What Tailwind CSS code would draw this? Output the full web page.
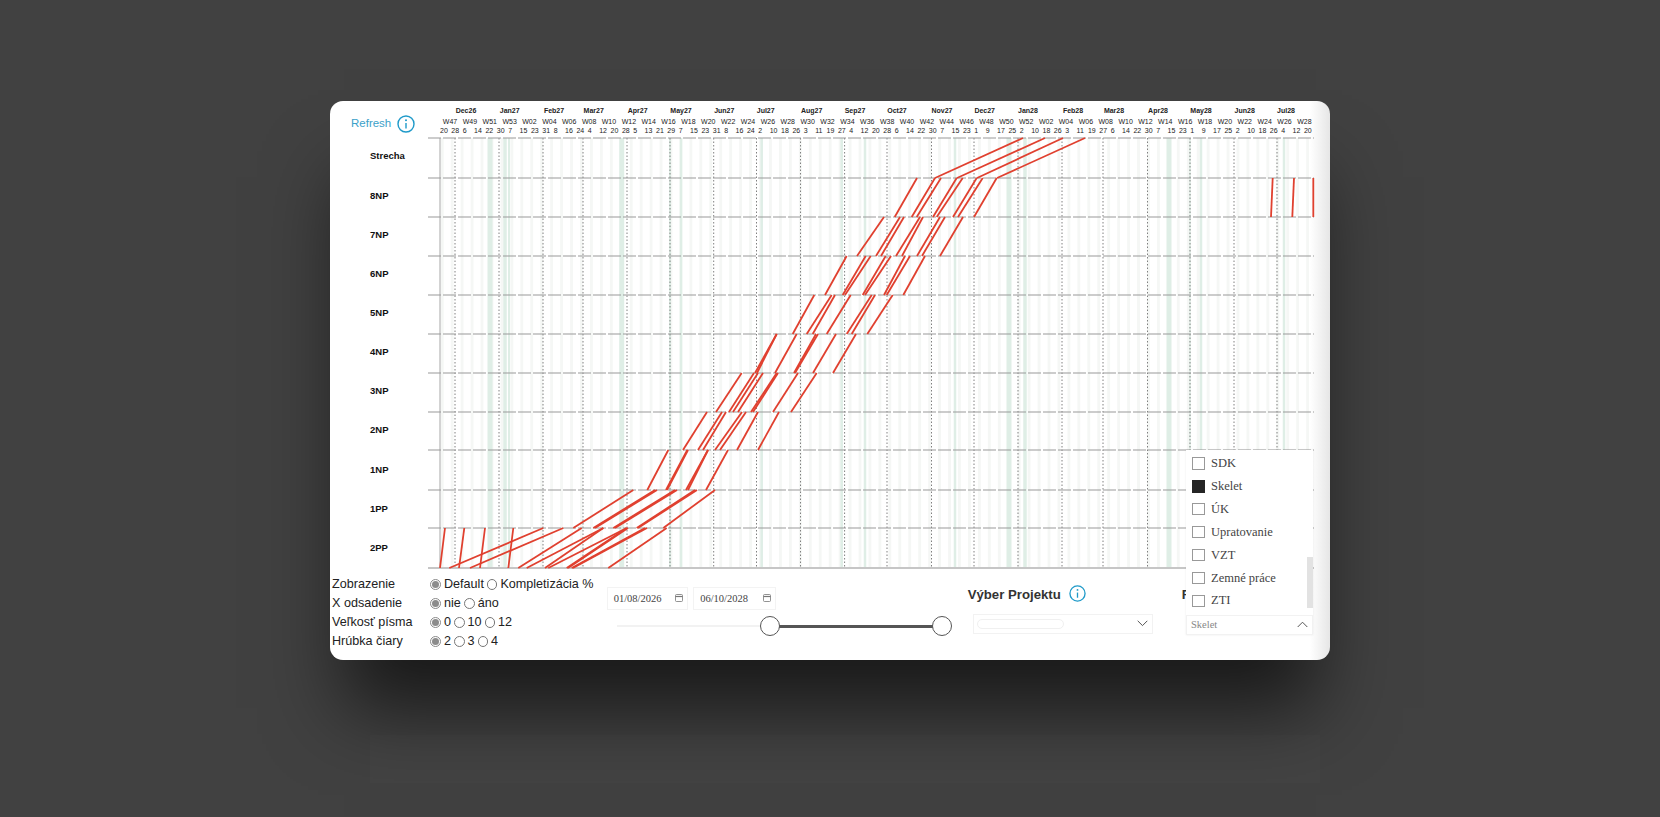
<!DOCTYPE html>
<html lang="sk">
<head>
    <meta charset="UTF-8">
    <title>Harmonogram</title>
    <script src="https://cdn.jsdelivr.net/npm/@tailwindcss/browser@4"></script>
</head>
<body class="relative bg-[#414141] h-screen overflow-hidden [font-family:'Liberation_Sans',sans-serif]">
    <!-- faint floor reflection under the card -->
    <div class="absolute left-[370px] top-[735px] w-[950px] h-[48px] bg-white/[0.012]"></div>

    <div class="relative flex justify-center pt-[101px]">
        <!-- Card -->
        <div class="relative w-[1000px] h-[559px] rounded-[13px] bg-linear-to-r from-white from-[98%] to-[#e6e6e6] shadow-[0_62px_72px_-14px_rgba(0,0,0,0.62)] flex flex-col">

            <!-- Chart area -->
            <div class="flex h-[468px]">
                <div class="w-[98px] shrink-0 flex flex-col">
                    <div class="h-[37px] flex items-center pl-[21px] gap-[5px] pt-[8px]">
                        <span class="text-[11.5px] text-[#3ba1c9]">Refresh</span>
                        <svg class="w-[18px] h-[18px] ml-[1px]" viewBox="0 0 18 18" fill="none"><circle cx="9" cy="9" r="8" stroke="#1f9ac9" stroke-width="1.4"/><circle cx="9" cy="5.2" r="1" fill="#1f9ac9"/><path d="M9 8v5.5" stroke="#1f9ac9" stroke-width="1.4"/></svg>
                    </div>
                    <div class="flex-1 grid grid-rows-11 pl-[40px] text-[9.5px] font-bold text-[#111] -mt-[1px] pb-[1.5px]">
                        <div class="flex items-center">Strecha</div>
                        <div class="flex items-center">8NP</div>
                        <div class="flex items-center">7NP</div>
                        <div class="flex items-center">6NP</div>
                        <div class="flex items-center">5NP</div>
                        <div class="flex items-center">4NP</div>
                        <div class="flex items-center">3NP</div>
                        <div class="flex items-center">2NP</div>
                        <div class="flex items-center">1NP</div>
                        <div class="flex items-center">1PP</div>
                        <div class="flex items-center">2PP</div>
                    </div>
                </div>
                <svg id="chart" class="w-[902px] h-[468px] shrink-0" viewBox="428 101 902 468"></svg>
            </div>

            <!-- Controls -->
            <div class="flex flex-1">
                <!-- Options -->
                <div class="w-[276.7px] shrink-0 pl-[2px] pt-[6px] text-[12.6px] text-[#222] leading-[19px]">
                    <div class="flex h-[19px] items-center">
                        <span class="w-[98px]">Zobrazenie</span>
                        <span class="w-[10.5px] h-[10.5px] rounded-full border border-[#8a8a8a] flex items-center justify-center mr-[3.5px]"><span class="w-[7.5px] h-[7.5px] rounded-full bg-[#8c8c8c]"></span></span>
                        <span>Default</span>
                        <span class="w-[10.5px] h-[10.5px] rounded-full border border-[#777] ml-[3px] mr-[3px]"></span>
                        <span>Kompletizácia %</span>
                    </div>
                    <div class="flex h-[19px] items-center">
                        <span class="w-[98px]">X odsadenie</span>
                        <span class="w-[10.5px] h-[10.5px] rounded-full border border-[#8a8a8a] flex items-center justify-center mr-[3.5px]"><span class="w-[7.5px] h-[7.5px] rounded-full bg-[#8c8c8c]"></span></span>
                        <span>nie</span>
                        <span class="w-[10.5px] h-[10.5px] rounded-full border border-[#777] ml-[3.5px] mr-[3px]"></span>
                        <span>áno</span>
                    </div>
                    <div class="flex h-[19px] items-center">
                        <span class="w-[98px]">Veľkosť písma</span>
                        <span class="w-[10.5px] h-[10.5px] rounded-full border border-[#8a8a8a] flex items-center justify-center mr-[3.5px]"><span class="w-[7.5px] h-[7.5px] rounded-full bg-[#8c8c8c]"></span></span>
                        <span>0</span>
                        <span class="w-[10.5px] h-[10.5px] rounded-full border border-[#777] ml-[3px] mr-[3px]"></span>
                        <span>10</span>
                        <span class="w-[10.5px] h-[10.5px] rounded-full border border-[#777] ml-[3px] mr-[3px]"></span>
                        <span>12</span>
                    </div>
                    <div class="flex h-[19px] items-center">
                        <span class="w-[98px]">Hrúbka čiary</span>
                        <span class="w-[10.5px] h-[10.5px] rounded-full border border-[#8a8a8a] flex items-center justify-center mr-[3.5px]"><span class="w-[7.5px] h-[7.5px] rounded-full bg-[#8c8c8c]"></span></span>
                        <span>2</span>
                        <span class="w-[10.5px] h-[10.5px] rounded-full border border-[#777] ml-[3px] mr-[3px]"></span>
                        <span>3</span>
                        <span class="w-[10.5px] h-[10.5px] rounded-full border border-[#777] ml-[3px] mr-[3px]"></span>
                        <span>4</span>
                    </div>
                </div>

                <!-- Dates and slider -->
                <div class="w-[361px] shrink-0 pt-[18px]">
                    <div class="flex gap-[5px] [font-family:'Liberation_Serif',serif] text-[10.5px] text-[#444]">
                        <div class="w-[81.5px] h-[23px] border border-[#f3f3f3] flex items-center justify-between pl-[6px] pr-[4px]">
                            <span>01/08/2026</span>
                            <svg class="w-[8px] h-[8px] mb-[2px]" viewBox="0 0 8 8" fill="none"><rect x="0.5" y="0.5" width="7" height="7" rx="1" stroke="#777" stroke-width="0.8"/><path d="M0.5 2.5h7" stroke="#777" stroke-width="1.2"/></svg>
                        </div>
                        <div class="w-[82.5px] h-[23px] border border-[#f3f3f3] flex items-center justify-between pl-[6px] pr-[4px]">
                            <span>06/10/2028</span>
                            <svg class="w-[8px] h-[8px] mb-[2px]" viewBox="0 0 8 8" fill="none"><rect x="0.5" y="0.5" width="7" height="7" rx="1" stroke="#777" stroke-width="0.8"/><path d="M0.5 2.5h7" stroke="#777" stroke-width="1.2"/></svg>
                        </div>
                    </div>
                    <div class="relative ml-[10px] mt-[15px] w-[325px] h-[2px] bg-[#f2f2f2]">
                        <div class="absolute left-[153px] right-0 h-[2.5px] bg-[#555]"></div>
                        <div class="absolute left-[143px] top-[-9px] w-[20px] h-[20px] rounded-full bg-white border-[1.5px] border-[#555]"></div>
                        <div class="absolute left-[315px] top-[-9px] w-[20px] h-[20px] rounded-full bg-white border-[1.5px] border-[#555]"></div>
                    </div>
                </div>

                <!-- Project select -->
                <div class="w-[214px] shrink-0 pt-[16px]">
                    <div class="flex items-center gap-[8px] h-[20px]">
                        <span class="text-[13.2px] font-bold text-[#333]">Výber Projektu</span>
                        <svg class="w-[17px] h-[17px] -mt-[3px]" viewBox="0 0 18 18" fill="none"><circle cx="9" cy="9" r="8" stroke="#1f9ac9" stroke-width="1.4"/><circle cx="9" cy="5.2" r="1" fill="#1f9ac9"/><path d="M9 8v5.5" stroke="#1f9ac9" stroke-width="1.4"/></svg>
                    </div>
                    <div class="ml-[5px] mt-[9px] w-[180px] h-[19.5px] border border-[#f2f2f2] flex items-center justify-between pl-[3px] pr-[4px]">
                        <div class="w-[87px] h-[10px] border border-[#f0f0f0] rounded-[5px]"></div>
                        <svg class="w-[11px] h-[7px]" viewBox="0 0 11 7" fill="none"><path d="M0.7 0.8l4.8 4.8 4.8-4.8" stroke="#555" stroke-width="1"/></svg>
                    </div>
                </div>

                <!-- Second select, title is covered by the open list -->
                <div class="pt-[16px] text-[13.2px] font-bold text-[#333]"><div class="h-[20px] flex items-center">F</div></div>
            </div>

            <!-- Open dropdown list -->
            <div class="absolute left-[856px] top-[349px] w-[126.5px] h-[184.5px] bg-white shadow-[0_0_2px_rgba(0,0,0,0.08)] flex flex-col">
                <div class="flex-1 relative pl-[6px] pt-[2px] [font-family:'Liberation_Serif',serif] text-[12.5px] text-[#444]">
                    <div class="flex items-center gap-[6.5px] h-[22.9px]"><span class="w-[12.5px] h-[12.5px] border border-[#999]"></span>SDK</div>
                    <div class="flex items-center gap-[6.5px] h-[22.9px]"><span class="w-[12.5px] h-[12.5px] bg-[#252525]"></span>Skelet</div>
                    <div class="flex items-center gap-[6.5px] h-[22.9px]"><span class="w-[12.5px] h-[12.5px] border border-[#999]"></span>ÚK</div>
                    <div class="flex items-center gap-[6.5px] h-[22.9px]"><span class="w-[12.5px] h-[12.5px] border border-[#999]"></span>Upratovanie</div>
                    <div class="flex items-center gap-[6.5px] h-[22.9px]"><span class="w-[12.5px] h-[12.5px] border border-[#999]"></span>VZT</div>
                    <div class="flex items-center gap-[6.5px] h-[22.9px]"><span class="w-[12.5px] h-[12.5px] border border-[#999]"></span>Zemné práce</div>
                    <div class="flex items-center gap-[6.5px] h-[22.9px]"><span class="w-[12.5px] h-[12.5px] border border-[#999]"></span>ZTI</div>
                    <div class="absolute right-0 top-[107px] w-[6px] h-[51px] bg-[#e2e2e2]"></div>
                </div>
                <div class="h-[19.5px] border border-[#f2f2f2] flex items-center justify-between pl-[4px] pr-[4px] [font-family:'Liberation_Serif',serif] text-[10.5px] text-[#888]">
                    <span>Skelet</span>
                    <svg class="w-[11px] h-[7px]" viewBox="0 0 11 7" fill="none"><path d="M0.7 6l4.8-4.8 4.8 4.8" stroke="#555" stroke-width="1"/></svg>
                </div>
            </div>
        </div>
    </div>

    <script>
        // Time axis: 9.947px per week, stripes start on the first Saturday
        const rowY = [138, 178, 217, 256, 295, 334, 373, 412, 450, 490, 528, 568];
        const top0 = rowY[0], bottom0 = rowY[11], h0 = bottom0 - top0;

        const months = [['Dec26',466],['Jan27',509.7],['Feb27',554],['Mar27',593.7],['Apr27',637.7],['May27',681],['Jun27',724.3],['Jul27',765.7],['Aug27',811.7],['Sep27',855],['Oct27',897],['Nov27',942],['Dec27',984.7],['Jan28',1028],['Feb28',1073],['Mar28',1114],['Apr28',1158],['May28',1201],['Jun28',1244.7],['Jul28',1286]];
        const weeks = 'W47 W49 W51 W53 W02 W04 W06 W08 W10 W12 W14 W16 W18 W20 W22 W24 W26 W28 W30 W32 W34 W36 W38 W40 W42 W44 W46 W48 W50 W52 W02 W04 W06 W08 W10 W12 W14 W16 W18 W20 W22 W24 W26 W28'.split(' ');
        const dates = '20 28 6 14 22 30 7 15 23 31 8 16 24 4 12 20 28 5 13 21 29 7 15 23 31 8 16 24 2 10 18 26 3 11 19 27 4 12 20 28 6 14 22 30 7 15 23 1 9 17 25 2 10 18 26 3 11 19 27 6 14 22 30 7 15 23 1 9 17 25 2 10 18 26 4 12 20'.split(' ');
        const monthLines = [455, 499, 543, 583, 627, 670, 713.7, 756.5, 800.5, 844.6, 887, 931.5, 974, 1018, 1062, 1103, 1147.5, 1190, 1234, 1277];
        // holidays, [x, width]
        const holidays = [[490,5],[505,3.5],[509,2],[621.7,5],[670,2],[681,2.5],[761.7,2.5],[841.7,2.5],[865,2.5],[955,2.5],[1009,5],[1025,3.5],[1169,5],[1190,1.5],[1201,2.5],[1284,2.5]];

        // red work segments per floor: [bottom x, top x]
        const works = [
            [1, [[935,1023],[957,1045],[977,1063],[997,1085]]],
            [2, [[894.7,917],[911.7,935],[916.7,941],[933,956.7],[936.7,962.7],[953,976.7],[958,982.7],[974,996.7],[1271,1272.7],[1292.3,1294],[1313.3,1313.3]]],
            [3, [[857,884],[876,900],[881,904],[896,920],[902,923],[917,940],[922,945],[940,963]]],
            [4, [[825,846.7],[842.7,865.7],[845,870.7],[862.7,885.7],[865,891],[884,905],[886.7,910],[903.3,925]]],
            [5, [[792.7,814.3],[806.7,831.7],[812.7,835],[826.7,850.7],[846.7,871.7],[851.7,875],[867.3,892.7]]],
            [6, [[755,776.7],[757,776.7],[775,796.7],[794,816],[795,818],[813,836],[833,856]]],
            [7, [[716,741.7],[729,754],[733,758],[738,763],[751,776.7],[753,778],[773,798],[791,816.7]]],
            [8, [[683,707],[698,722],[703,726],[715,742],[720,746],[737,758],[758,779]]],
            [9, [[647.3,668.3],[666,687.3],[667,688],[686,708],[688,708],[706,728]]],
            [10, [[573.3,633.3],[593.3,655],[595,657],[613.3,675],[615,677],[636.7,695],[638,697],[663.3,715]]],
            [11, [[440,445],[459,464.3],[480,485],[508.3,513.3],[449.3,543.3],[470,563.3],[518.3,581.7],[526.7,603.3],[545,603.3],[548.3,626.7],[566.7,626.7],[568,628],[571.7,645],[573,647],[608.3,666.7]]]
        ];

        let svg = '';
        // weekend stripes
        for (let x = 440.8; x < 1314; x += 9.947) {
            svg += `<rect x="${x}" y="${top0}" width="2.84" height="${h0}" fill="#f5f7f5"/>`;
        }
        holidays.forEach(([x, w]) => {
            svg += `<rect x="${x - w / 2}" y="${top0}" width="${w}" height="${h0}" fill="#dfeee6"/>`;
        });
        // month lines
        monthLines.forEach(x => {
            svg += `<line x1="${x}" x2="${x}" y1="${top0}" y2="${bottom0}" stroke="#808080" stroke-width="1" stroke-dasharray="1.5 2"/>`;
        });
        svg += `<line x1="440" x2="440" y1="${top0}" y2="${bottom0}" stroke="#c4c4c4" stroke-width="1.5"/>`;
        // floor lines
        rowY.slice(0, -1).forEach(y => {
            svg += `<line x1="428" x2="1314" y1="${y}" y2="${y}" stroke="#999" stroke-width="1.2" stroke-dasharray="13 2"/>`;
        });
        svg += `<line x1="428" x2="1314" y1="${bottom0}" y2="${bottom0}" stroke="#c6c6c6" stroke-width="2"/>`;
        // work lines
        works.forEach(([row, segs]) => {
            segs.forEach(([bottom, top]) => {
                svg += `<line x1="${bottom}" x2="${top}" y1="${rowY[row]}" y2="${rowY[row - 1]}" stroke="#e0402f" stroke-width="1.8"/>`;
            });
        });
        // axis labels
        months.forEach(([t, x]) => {
            svg += `<text x="${x}" y="112.8" text-anchor="middle" class="text-[7px] font-bold" fill="#222">${t}</text>`;
        });
        weeks.forEach((t, i) => {
            svg += `<text x="${450 + i * 19.87}" y="123.5" text-anchor="middle" class="text-[7px]" fill="#222">${t}</text>`;
        });
        dates.forEach((t, i) => {
            svg += `<text x="${440 + i * 11.368}" y="133" class="text-[7px]" fill="#222">${t}</text>`;
        });
        document.getElementById('chart').innerHTML = svg;
    </script>
</body>
</html>
